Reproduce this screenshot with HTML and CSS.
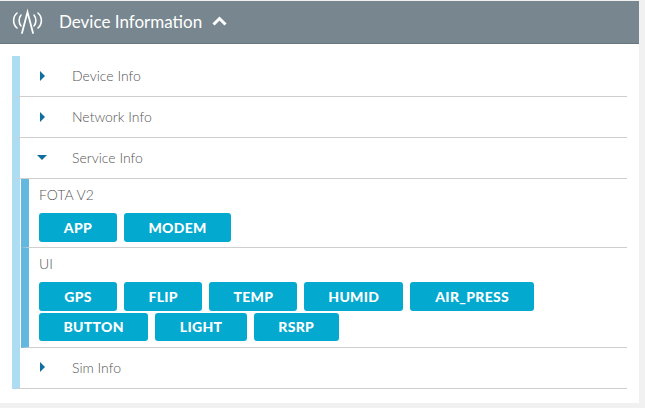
FILE: index.html
```html
<!DOCTYPE html>
<html lang="en">
<head>
    <meta charset="UTF-8">
    <meta name="viewport" content="width=device-width, initial-scale=1.0">
    <title>Device Information</title>
    <link rel="stylesheet" href="styles.css">
</head>
<body>
    <div class="card">
        <div class="card-header">
            <svg class="signal-icon" width="32" height="28" viewBox="0 0 32 28" fill="none" stroke="#fff" stroke-linecap="round">
                <path d="M11 26 L16.5 5 L22 26" stroke-width="1.8"/>
                <path d="M10 8 C7.5 11 7.5 16 10 19" stroke-width="1.6"/>
                <path d="M23 8 C25.5 11 25.5 16 23 19" stroke-width="1.6"/>
                <path d="M6 6 C1.5 10 1.5 17 6 21" stroke-width="1.6"/>
                <path d="M27 6 C31.5 10 31.5 17 27 21" stroke-width="1.6"/>
            </svg>
            <span class="card-title">Device Information</span>
            <svg class="chevron-up" width="15" height="10" viewBox="0 0 15 10" fill="none" stroke="#fff" stroke-width="3">
                <path d="M1.5 8.5 L7.5 2.5 L13.5 8.5"/>
            </svg>
        </div>

        <div class="info-list">
            <div class="info-row">
                <span class="arrow-right"></span>
                <span class="row-label">Device Info</span>
            </div>
            <div class="info-row">
                <span class="arrow-right"></span>
                <span class="row-label">Network Info</span>
            </div>
            <div class="info-row">
                <span class="arrow-down"></span>
                <span class="row-label">Service Info</span>
            </div>

            <div class="service-group">
                <div class="service-body">
                    <div class="service-name">FOTA V2</div>
                    <div class="btn-wrap">
                        <button class="action-btn">APP</button>
                        <button class="action-btn">MODEM</button>
                    </div>
                </div>
            </div>
            <div class="service-group">
                <div class="service-body">
                    <div class="service-name">UI</div>
                    <div class="btn-wrap">
                        <button class="action-btn">GPS</button>
                        <button class="action-btn">FLIP</button>
                        <button class="action-btn btn-tight">TEMP</button>
                        <button class="action-btn btn-tight">HUMID</button>
                        <button class="action-btn btn-long">AIR_PRESS</button>
                        <button class="action-btn">BUTTON</button>
                        <button class="action-btn">LIGHT</button>
                        <button class="action-btn">RSRP</button>
                    </div>
                </div>
            </div>

            <div class="info-row">
                <span class="arrow-right"></span>
                <span class="row-label">Sim Info</span>
            </div>
        </div>
    </div>
</body>
</html>
```

FILE: styles.css
```css
html, body {
    margin: 0;
    height: 100%;
}

body {
    background-color: #f1f1f1;
    font-family: "Lato", "Liberation Sans", sans-serif;
    overflow: hidden;
}

.card {
    width: 639px;
    height: 402px;
    margin-top: 1px;
    background-color: #fff;
}

.card-header {
    display: flex;
    align-items: center;
    box-sizing: border-box;
    height: 43px;
    padding: 0 0 2px 11px;
    background-color: #78878f;
    border-bottom: 1px solid #67757c;
}

.signal-icon {
    margin-right: 16px;
}

.card-title {
    color: #fff;
    font-size: 17px;
    margin-right: 10px;
}

.info-list {
    padding: 12px 12px 0 12px;
}

.info-row {
    display: flex;
    align-items: center;
    height: 41px;
    box-sizing: border-box;
    padding-bottom: 1px;
    border-left: 8px solid #aeddf3;
    border-bottom: 1px solid #cfcfcf;
}

.arrow-right {
    width: 0;
    height: 0;
    margin-left: 20px;
    border-left: 5px solid #0f6f9f;
    border-top: 5px solid transparent;
    border-bottom: 5px solid transparent;
}

.arrow-down {
    width: 0;
    height: 0;
    margin-left: 17px;
    border-top: 5px solid #0f6f9f;
    border-left: 5px solid transparent;
    border-right: 5px solid transparent;
}

.arrow-right + .row-label {
    margin-left: 27px;
}

.arrow-down + .row-label {
    margin-left: 25px;
}

.row-label {
    color: #555;
    font-size: 14px;
    font-weight: 300;
}

.service-group {
    border-left: 8px solid #aeddf3;
}

.service-body {
    margin-left: 1px;
    padding: 7px 0 5.5px 10px;
    border-left: 8px solid #63b8e0;
    border-bottom: 1px solid #cfcfcf;
}

.service-name {
    color: #555;
    font-size: 14px;
    font-weight: 300;
    line-height: 18px;
    margin-bottom: 9px;
}

.btn-wrap {
    display: flex;
    flex-wrap: wrap;
    gap: 2px 7px;
}

.action-btn {
    min-width: 78px;
    height: 28.5px;
    padding: 0 24.5px;
    border: none;
    border-radius: 3px;
    background-color: #03a9cf;
    color: #fff;
    font-family: inherit;
    font-size: 14px;
    font-weight: 900;
    letter-spacing: 0.3px;
}

.btn-tight {
    padding: 0 24px;
}

.btn-long {
    padding: 0 25px;
}
```
